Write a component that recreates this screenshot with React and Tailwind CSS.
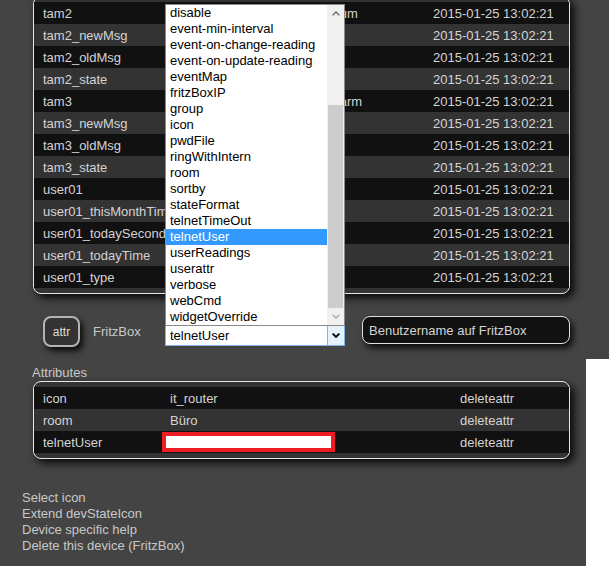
import React from 'react';

const readings = [
    ['tam2', 'Anrufbeantworter 2 - Schlafraum'],
    ['tam2_newMsg', '0'],
    ['tam2_oldMsg', '0'],
    ['tam2_state', 'off'],
    ['tam3', 'Anrufbeantworter Garagen-Alarm'],
    ['tam3_newMsg', '0'],
    ['tam3_oldMsg', '0'],
    ['tam3_state', 'off'],
    ['user01', 'Benutzer'],
    ['user01_thisMonthTime', '0:00'],
    ['user01_todaySeconds', '0'],
    ['user01_todayTime', '0:00'],
    ['user01_type', 'Benutzer'],
];

const attrOptions = [
    'disable',
    'event-min-interval',
    'event-on-change-reading',
    'event-on-update-reading',
    'eventMap',
    'fritzBoxIP',
    'group',
    'icon',
    'pwdFile',
    'ringWithIntern',
    'room',
    'sortby',
    'stateFormat',
    'telnetTimeOut',
    'telnetUser',
    'userReadings',
    'userattr',
    'verbose',
    'webCmd',
    'widgetOverride',
];

const Chevron = ({ up = false, width = 1.3, className = '' }) => (
    <svg width="8" height="5" viewBox="0 0 8 5" className={className}>
        <path
            d={up ? 'M0.6 4.4 L4 1 L7.4 4.4' : 'M0.6 0.6 L4 4 L7.4 0.6'}
            fill="none"
            stroke="currentColor"
            strokeWidth={width}
        />
    </svg>
);

export default function App() {
    return (
        <div className="flex h-[566px] w-[609px] overflow-hidden bg-[#444] font-['Liberation_Sans',Arial,sans-serif] text-[13px] leading-[16px] text-[#d4d4d4]">
            <div className="w-[586px] shrink-0">

                {/* READINGS */}
                <div className="-mt-[4px] ml-[33px] w-[537px] rounded-lg border border-[#e6e6e6] bg-[#333] py-[5px] shadow-[4px_4px_8px_rgba(0,0,0,0.9)]">
                    {readings.map(([name, value], i) => (
                        <div
                            key={name}
                            className={`flex h-[22px] items-center whitespace-nowrap pl-[9px] pt-[1px] ${i % 2 === 0 ? 'bg-[#111]' : 'bg-[#333]'}`}
                        >
                            <div className="w-[127px] shrink-0">{name}</div>
                            <div className="w-[263px] shrink-0">{value}</div>
                            <div>2015-01-25 13:02:21</div>
                        </div>
                    ))}
                </div>

                {/* ATTR CONTROLS */}
                <div className="mt-[22px] flex h-[31px] items-start">
                    <button className="ml-[43px] h-[31px] w-[37px] rounded-lg border-2 border-[#b4b4b4] bg-[#333] text-[12px] text-[#ddd] shadow-[3px_4px_6px_rgba(0,0,0,0.85)]">
                        attr
                    </button>
                    <div className="ml-[13px] w-[72px] self-center pt-[1px] text-[#c8c8c8]">FritzBox</div>

                    <div className="relative mt-[9px] flex h-[21px] w-[180px] border border-[#7eb4ea] bg-white text-black">
                        <div className="flex flex-1 items-center pl-[4px]">telnetUser</div>
                        <div className="flex w-[17px] items-center justify-center border-l border-[#7eb4ea] bg-[#e5f1fb]">
                            <Chevron width={1.8} />
                        </div>

                        {/* OPEN LIST */}
                        <div className="absolute -left-[1px] bottom-full flex h-[322px] w-[180px] border border-[#8a8a8a] bg-white">
                            <div className="flex-1">
                                {attrOptions.map((opt) => (
                                    <div
                                        key={opt}
                                        className={`h-[16px] whitespace-nowrap pl-[4px] leading-[16px] ${opt === 'telnetUser' ? 'bg-[#3399ff] text-white' : 'text-black'}`}
                                    >
                                        {opt}
                                    </div>
                                ))}
                            </div>
                            <div className="flex w-[17px] flex-col bg-[#f0f0f0]">
                                <div className="flex h-[17px] items-center justify-center text-[#606060]">
                                    <Chevron up />
                                </div>
                                <div className="flex flex-1 flex-col justify-end">
                                    <div className="mx-[1px] h-[203px] bg-[#cdcdcd]" />
                                </div>
                                <div className="flex h-[17px] items-center justify-center text-[#a3a3a3]">
                                    <Chevron />
                                </div>
                            </div>
                        </div>
                    </div>

                    <div className="ml-[17px] flex h-[28px] w-[208px] items-center rounded-lg border border-[#e0e0e0] bg-[#111] pl-[6px] pt-[1px] text-[#d4d4d4] shadow-[3px_4px_6px_rgba(0,0,0,0.85)]">
                        Benutzername auf FritzBox
                    </div>
                </div>

                {/* ATTRIBUTES */}
                <div className="mt-[18px] pl-[32px] text-[#c8c8c8]">Attributes</div>
                <div className="ml-[33px] w-[537px] rounded-lg border border-[#e6e6e6] bg-[#333] py-[5px] shadow-[4px_4px_8px_rgba(0,0,0,0.9)]">
                    <div className="flex h-[22px] items-center bg-[#111] pl-[9px] pt-[1px]">
                        <div className="w-[127px] shrink-0">icon</div>
                        <div className="w-[290px] shrink-0">it_router</div>
                        <div>deleteattr</div>
                    </div>
                    <div className="flex h-[22px] items-center bg-[#333] pl-[9px] pt-[1px]">
                        <div className="w-[127px] shrink-0">room</div>
                        <div className="w-[290px] shrink-0">Büro</div>
                        <div>deleteattr</div>
                    </div>
                    <div className="flex h-[22px] items-center bg-[#111] pl-[9px]">
                        <div className="w-[127px] shrink-0 pt-[1px]">telnetUser</div>
                        <div className="w-[290px] shrink-0">
                            <div className="-ml-[8px] h-[20px] w-[173px] border-4 border-[#ee1c24] bg-white" />
                        </div>
                        <div className="pt-[1px]">deleteattr</div>
                    </div>
                </div>

                {/* LINKS */}
                <div className="mt-[31px] pl-[22px] text-[#c8c8c8]">
                    <div>Select icon</div>
                    <div>Extend devStateIcon</div>
                    <div>Device specific help</div>
                    <div>Delete this device (FritzBox)</div>
                </div>
            </div>

            <div className="flex-1">
                <div className="mt-[359px] h-[207px] bg-white" />
            </div>
        </div>
    );
}
